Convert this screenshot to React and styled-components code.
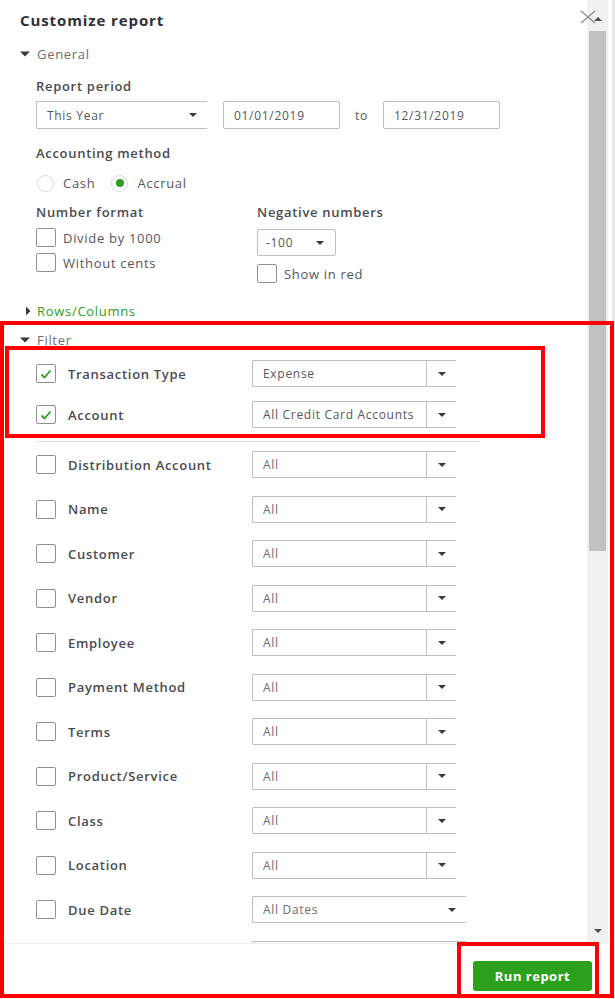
import React from 'react'
import styled, { createGlobalStyle } from 'styled-components'

const GlobalStyle = createGlobalStyle`
    html, body {
        margin: 0;
        padding: 0;
        background: #ffffff;
    }
    body {
        font-family: "Open Sans", "Liberation Sans", sans-serif;
        color: #393a3d;
        letter-spacing: 0.7px;
    }
`

const Root = styled.div`
    position: relative;
    width: 615px;
    height: 999px;
`

const Panel = styled.div`
    width: 612px;
    height: 999px;
    border-right: 3px solid #e8e9eb;
    display: flex;
    flex-direction: column;
    background: #ffffff;
    overflow: hidden;
`

const ScrollArea = styled.div`
    flex: 0 0 943px;
    display: flex;
    overflow: hidden;
`

const Content = styled.div`
    flex: 1;
    padding: 10px 0 0 20px;
    overflow: hidden;
`

const Track = styled.div`
    flex: 0 0 21px;
    margin-right: 4px;
    background: #f1f1f1;
    display: flex;
    flex-direction: column;
    align-items: center;
    padding: 17px 0 10px;
    box-sizing: border-box;
`

const Thumb = styled.div`
    width: 17px;
    height: 520px;
    margin-top: 10px;
    background: #c1c1c1;
`

const TrackArrow = styled.div`
    width: 0;
    height: 0;
    border-left: 4px solid transparent;
    border-right: 4px solid transparent;
    ${p => p.$up
        ? 'border-bottom: 4px solid #505050;'
        : 'border-top: 4px solid #505050; margin-top: auto;'}
`

const Close = styled.button`
    position: absolute;
    left: 579px;
    top: 10px;
    width: 19px;
    height: 14px;
    padding: 0;
    border: none;
    background: transparent;
    cursor: pointer;
`

const Title = styled.h2`
    margin: 0;
    font-size: 15px;
    line-height: 20px;
    font-weight: 700;
    letter-spacing: 0.9px;
    color: #2f3034;
`

const SectionHead = styled.div`
    display: flex;
    align-items: center;
    height: 18px;
    margin-top: ${p => p.$mt}px;
    font-size: 13px;
    color: ${p => (p.$link ? '#2ca01c' : '#6b6c72')};
    > svg {
        width: 17px;
        flex: 0 0 17px;
    }
`

const Section = styled.div`
    padding-left: 16px;
`

const Label = styled.div`
    margin-top: ${p => p.$mt}px;
    font-size: 13px;
    line-height: 18px;
    font-weight: 600;
    color: #4a4b50;
`

const ControlRow = styled.div`
    display: flex;
    align-items: center;
    height: 28px;
    margin-top: 6px;
`

const SelectBox = styled.div`
    display: flex;
    align-items: center;
    box-sizing: border-box;
    width: ${p => p.$w}px;
    height: ${p => p.$h || 28}px;
    margin-top: ${p => p.$mt || 0}px;
    border: 1px solid #babec5;
    border-right-color: ${p => (p.$clipped ? 'transparent' : '#babec5')};
    border-radius: 2px;
    padding-left: ${p => p.$pl || 10}px;
    font-size: 12px;
    color: ${p => (p.$muted ? '#6b6c72' : '#55575d')};
    white-space: nowrap;
    overflow: hidden;
`

const Value = styled.span`
    flex: 1;
    overflow: hidden;
`

const ArrowCell = styled.div`
    flex: 0 0 ${p => p.$w}px;
    height: 100%;
    display: flex;
    align-items: center;
    justify-content: center;
    border-left: ${p => (p.$split ? '1px solid #babec5' : 'none')};
`

const Caret = styled.div`
    width: 0;
    height: 0;
    border-left: 4px solid transparent;
    border-right: 4px solid transparent;
    border-top: 4px solid #393a3d;
`

const DateInput = styled.div`
    box-sizing: border-box;
    width: 117px;
    height: 28px;
    margin-left: ${p => p.$ml}px;
    border: 1px solid #babec5;
    border-radius: 2px;
    padding-left: 10px;
    display: flex;
    align-items: center;
    font-size: 12px;
    color: #55575d;
`

const ToText = styled.span`
    margin-left: 15px;
    font-size: 12px;
    color: #55575d;
`

const RadioRow = styled.div`
    display: flex;
    align-items: center;
    height: 20px;
    margin-top: 11px;
    margin-left: 1px;
`

const Radio = styled.span`
    box-sizing: border-box;
    width: 17px;
    height: 17px;
    border-radius: 50%;
    border: 1px solid #d4d7dc;
    display: flex;
    align-items: center;
    justify-content: center;
    &::after {
        content: '';
        width: 8px;
        height: 8px;
        border-radius: 50%;
        background: ${p => (p.$on ? '#2ca01c' : 'transparent')};
    }
`

const OptionText = styled.span`
    margin-left: ${p => p.$ml || 9}px;
    margin-right: ${p => p.$mr || 0}px;
    font-size: 13px;
    color: #55575d;
`

const Columns = styled.div`
    display: flex;
    margin-top: 10px;
`

const Column = styled.div`
    width: ${p => p.$w}px;
    display: flex;
    flex-direction: column;
`

const CheckLine = styled.label`
    display: flex;
    align-items: center;
    height: 19px;
    margin-top: ${p => p.$mt}px;
`

const Box = styled.span`
    box-sizing: border-box;
    flex: 0 0 20px;
    width: 20px;
    height: 19px;
    border: 1px solid #8d9096;
    border-radius: 2px;
    display: flex;
    align-items: center;
    justify-content: center;
    background: #ffffff;
`

const FilterList = styled.div`
    padding-left: 16px;
    margin-top: 11px;
`

const FilterRow = styled.div`
    display: flex;
    align-items: center;
    height: 27px;
    margin-top: ${p => p.$mt}px;
`

const FilterName = styled.span`
    flex: 0 0 184px;
    margin-left: 12px;
    font-size: 13px;
    font-weight: 600;
    color: #4a4b50;
    white-space: nowrap;
`

const RowLead = styled.span`
    flex: 0 0 216px;
`

const Divider = styled.div`
    width: 444px;
    height: 1px;
    margin: 13px 0 9px;
    background: #dcdee2;
`

const Footer = styled.div`
    flex: 1;
    display: flex;
    justify-content: flex-end;
    align-items: flex-start;
    padding: 17px 20px 0 0;
    border-top: 1px solid #eeeff1;
`

const RunButton = styled.button`
    width: 119px;
    height: 30px;
    border: none;
    border-radius: 3px;
    background: #2ca01c;
    color: #ffffff;
    font-family: inherit;
    font-size: 13px;
    font-weight: 700;
    letter-spacing: 0.5px;
    cursor: pointer;
`

const Highlight = styled.div`
    position: absolute;
    left: ${p => p.$x}px;
    top: ${p => p.$y}px;
    width: ${p => p.$w}px;
    height: ${p => p.$h}px;
    border: 4px solid #ff0000;
    box-sizing: border-box;
    pointer-events: none;
`

const DownTriangle = () => (
    <svg viewBox="0 0 17 10" height="10">
        <path d="M0 2.5 L10 2.5 L5 7.5 Z" fill="#393a3d" />
    </svg>
)

const RightTriangle = () => (
    <svg viewBox="0 0 17 10" height="10">
        <path d="M6 0.5 L10.5 5 L6 9.5 Z" fill="#393a3d" />
    </svg>
)

const Check = () => (
    <svg width="14" height="12" viewBox="0 0 14 12">
        <path d="M2.5 6.5 L5.5 9.5 L11.5 2.5" fill="none" stroke="#2ca01c" strokeWidth="1.8" />
    </svg>
)

function FilterSelect({ value, muted, wide }) {
    if (wide) {
        return (
            <SelectBox $w={215} $h={27} $muted={muted} $clipped>
                <Value>{value}</Value>
                <ArrowCell $w={28}><Caret /></ArrowCell>
            </SelectBox>
        )
    }
    return (
        <SelectBox $w={205} $h={27} $muted={muted} $clipped>
            <Value>{value}</Value>
            <ArrowCell $w={29} $split><Caret /></ArrowCell>
        </SelectBox>
    )
}

const filters = [
    { name: 'Distribution Account', value: 'All' },
    { name: 'Name', value: 'All' },
    { name: 'Customer', value: 'All' },
    { name: 'Vendor', value: 'All' },
    { name: 'Employee', value: 'All' },
    { name: 'Payment Method', value: 'All' },
    { name: 'Terms', value: 'All' },
    { name: 'Product/Service', value: 'All' },
    { name: 'Class', value: 'All' },
    { name: 'Location', value: 'All' },
    { name: 'Due Date', value: 'All Dates', wide: true },
]

export default function App() {
    return (
        <Root>
            <GlobalStyle />
            <Panel>
                <ScrollArea>
                    <Content>
                        <Title>Customize report</Title>

                        <SectionHead $mt={15}><DownTriangle />General</SectionHead>
                        <Section>
                            <Label $mt={14}>Report period</Label>
                            <ControlRow>
                                <SelectBox $w={172} $clipped>
                                    <Value>This Year</Value>
                                    <ArrowCell $w={28}><Caret /></ArrowCell>
                                </SelectBox>
                                <DateInput $ml={15}>01/01/2019</DateInput>
                                <ToText>to</ToText>
                                <DateInput $ml={15}>12/31/2019</DateInput>
                            </ControlRow>

                            <Label $mt={15}>Accounting method</Label>
                            <RadioRow>
                                <Radio />
                                <OptionText $mr={16}>Cash</OptionText>
                                <Radio $on />
                                <OptionText>Accrual</OptionText>
                            </RadioRow>

                            <Columns>
                                <Column $w={221}>
                                    <Label $mt={0}>Number format</Label>
                                    <CheckLine $mt={7}><Box /><OptionText $ml={7}>Divide by 1000</OptionText></CheckLine>
                                    <CheckLine $mt={6}><Box /><OptionText $ml={7}>Without cents</OptionText></CheckLine>
                                </Column>
                                <Column $w={200}>
                                    <Label $mt={0}>Negative numbers</Label>
                                    <SelectBox $w={79} $h={27} $pl={8} $mt={8}>
                                        <Value>-100</Value>
                                        <ArrowCell $w={30}><Caret /></ArrowCell>
                                    </SelectBox>
                                    <CheckLine $mt={8}><Box /><OptionText $ml={7}>Show in red</OptionText></CheckLine>
                                </Column>
                            </Columns>
                        </Section>

                        <SectionHead $mt={19} $link><RightTriangle />Rows/Columns</SectionHead>
                        <SectionHead $mt={11}><DownTriangle />Filter</SectionHead>

                        <FilterList>
                            <FilterRow $mt={0}>
                                <Box><Check /></Box>
                                <FilterName>Transaction Type</FilterName>
                                <FilterSelect value="Expense" />
                            </FilterRow>
                            <FilterRow $mt={14}>
                                <Box><Check /></Box>
                                <FilterName>Account</FilterName>
                                <FilterSelect value="All Credit Card Accounts" />
                            </FilterRow>
                            <Divider />
                            {filters.map((f, i) => (
                                <FilterRow key={f.name} $mt={i === 0 ? 0 : 17.5}>
                                    <Box />
                                    <FilterName>{f.name}</FilterName>
                                    <FilterSelect value={f.value} muted wide={f.wide} />
                                </FilterRow>
                            ))}
                            <FilterRow $mt={17.5}>
                                <RowLead />
                                <FilterSelect value="" muted wide />
                            </FilterRow>
                        </FilterList>
                    </Content>
                    <Track>
                        <TrackArrow $up />
                        <Thumb />
                        <TrackArrow />
                    </Track>
                </ScrollArea>
                <Footer>
                    <RunButton>Run report</RunButton>
                </Footer>
            </Panel>

            <Close aria-label="Close">
                <svg width="19" height="14" viewBox="0 0 19 14">
                    <path d="M2 1 L16 13 M16 1 L2 13" stroke="#8d9096" strokeWidth="1.5" />
                </svg>
            </Close>

            <Highlight $x={0} $y={321} $w={614} $h={677} />
            <Highlight $x={5} $y={346} $w={540} $h={92} />
            <Highlight $x={457} $y={942} $w={142} $h={56} />
        </Root>
    )
}
